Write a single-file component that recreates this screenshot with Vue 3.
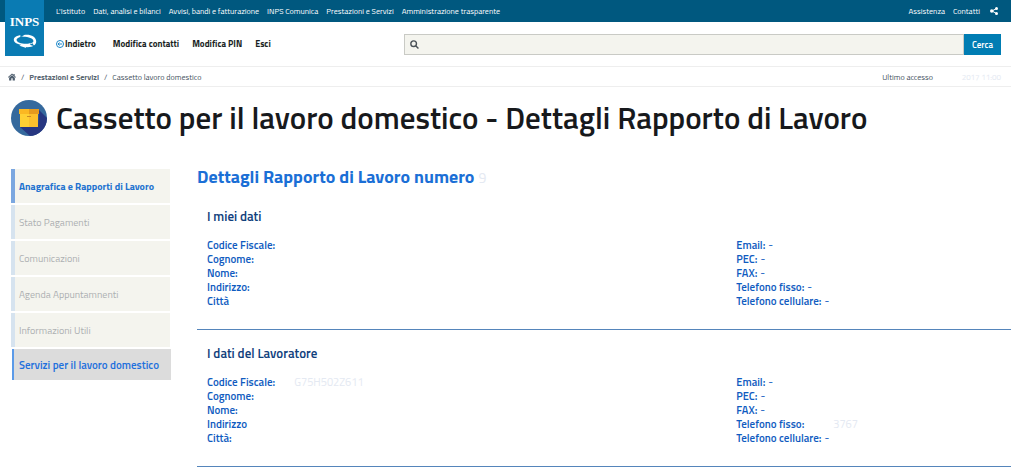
<script setup>
const topLinks = ["L'Istituto", 'Dati, analisi e bilanci', 'Avvisi, bandi e fatturazione', 'INPS Comunica', 'Prestazioni e Servizi', 'Amministrazione trasparente']
const menu = ['Anagrafica e Rapporti di Lavoro', 'Stato Pagamenti', 'Comunicazioni', 'Agenda Appuntamnenti', 'Informazioni Utili']
const sections = [
  {
    title: 'I miei dati',
    left: [['Codice Fiscale:', ''], ['Cognome:', ''], ['Nome:', ''], ['Indirizzo:', ''], ['Città', '']],
    right: [['Email:', '-'], ['PEC:', '-'], ['FAX:', '-'], ['Telefono fisso:', '-'], ['Telefono cellulare:', '-']],
  },
  {
    title: 'I dati del Lavoratore',
    left: [['Codice Fiscale:', 'G75H502Z611', true], ['Cognome:', ''], ['Nome:', ''], ['Indirizzo', ''], ['Città:', '']],
    right: [['Email:', '-'], ['PEC:', '-'], ['FAX:', '-'], ['Telefono fisso:', '3767', true], ['Telefono cellulare:', '-']],
  },
]
</script>

<template>
  <div class="page">
    <header class="header">
      <a class="logo" href="#" aria-label="INPS">
        <span class="logo-text">INPS</span>
        <svg class="logo-mark" viewBox="0 0 26 15" aria-hidden="true">
          <path fill="#fff" fill-rule="evenodd" d="M12 1C19 0 25 3 25 8C25 12 21 14.500 14 14L14.500 15L7 12.500L9 11.500C4 11 1 9 1 6C1 3 5 1 12 1ZM11 3C7 3 4 4.500 4 6.500C4 9 9 10.500 14 10.500C19 10.500 22 9.500 22 7.500C22 5 17 3 11 3Z" />
          <path fill="#0a7bb3" d="M8 0L12 2L8 3.500ZM23 13L18 11.500L21 10Z" />
        </svg>
      </a>
      <div class="topbar">
        <nav class="top-links" aria-label="Istituto">
          <a v-for="l in topLinks" :key="l" href="#">{{ l }}</a>
        </nav>
        <div class="top-side">
          <a href="#">Assistenza</a>
          <a href="#">Contatti</a>
          <a class="share" href="#" aria-label="Condividi">
            <svg viewBox="0 0 16 16" width="8" height="8"><path d="M13 3L4 8L13 13" fill="none" stroke="#fff" stroke-width="2" /><circle cx="13" cy="3" r="3" fill="#fff" /><circle cx="3.500" cy="8" r="3.500" fill="#fff" /><circle cx="13" cy="13" r="3" fill="#fff" /></svg>
          </a>
        </div>
      </div>
      <div class="tools">
        <nav class="user-nav" aria-label="Utente">
          <a class="back" href="#">
            <svg viewBox="0 0 16 16" width="8" height="8" fill="none" stroke="#1c86c8" stroke-width="2"><circle cx="8" cy="8" r="7" /><path d="M12 8H4M7 5L4 8L7 11" /></svg>Indietro
          </a>
          <a href="#">Modifica contatti</a>
          <a href="#">Modifica PIN</a>
          <a href="#">Esci</a>
        </nav>
        <form class="search" role="search" @submit.prevent>
          <div class="search-box">
            <svg viewBox="0 0 16 16" width="9" height="9" fill="none" stroke="#4a5157" stroke-width="2.500" aria-hidden="true"><circle cx="6.500" cy="6.500" r="5" /><path d="M10.500 10.500L15 15" /></svg>
            <input type="search" aria-label="Cerca nel sito" />
          </div>
          <button type="submit">Cerca</button>
        </form>
      </div>
    </header>

    <div class="crumb-bar">
      <nav class="crumbs" aria-label="Percorso">
        <a href="#" aria-label="Home"><svg viewBox="0 0 18 16" width="8" height="8"><path fill="#4f5f6f" d="M9 0L12.500 3V1H15V5.500L18 8L17 9.500L9 3L1 9.500L0 8ZM9 4L15.500 9.500V16H10.500V11H7.500V16H2.500V9.500Z" /></svg></a>
        <span>/</span>
        <a class="strong" href="#">Prestazioni e Servizi</a>
        <span>/</span>
        <span>Cassetto lavoro domestico</span>
      </nav>
      <p class="access">Ultimo accesso <span class="faded">2017 11:00</span></p>
    </div>

    <div class="title-row">
      <svg class="title-icon" viewBox="0 0 36 36" aria-hidden="true">
        <defs><clipPath id="disc"><circle cx="18" cy="18" r="18" /></clipPath></defs>
        <g clip-path="url(#disc)">
          <path fill="#35699d" d="M0 0H36V36H0Z" />
          <path fill="#273781" d="M28 10L36 18V36H19L9 27L27 26Z" />
          <path fill="#ffd033" d="M9 13H18V27H9Z" />
          <path fill="#fcc02c" d="M18 13H27V27H18Z" />
          <path fill="#fbb822" d="M8 9H18V14H8Z" />
          <path fill="#e59a1e" d="M18 9H28V14H18Z" />
          <path fill="#c98a24" d="M16 16H20V17H16Z" />
        </g>
      </svg>
      <h1>Cassetto per il lavoro domestico - Dettagli Rapporto di Lavoro</h1>
    </div>

    <div class="body">
      <aside class="side">
        <a v-for="(m, i) in menu" :key="m" href="#" :class="{ active: i === 0 }">{{ m }}</a>
        <a class="services" href="#">Servizi per il lavoro domestico</a>
      </aside>
      <main>
        <h2>Dettagli Rapporto di Lavoro numero <span class="faded small">9</span></h2>
        <section v-for="s in sections" :key="s.title">
          <h3>{{ s.title }}</h3>
          <div class="cols">
            <dl v-for="(col, i) in [s.left, s.right]" :key="i">
              <div v-for="f in col" :key="f[0]">
                <dt>{{ f[0] }}</dt>
                <dd :class="{ faded: f[2], late: f[2] && i === 0, far: f[2] && i === 1 }">{{ f[1] }}</dd>
              </div>
            </dl>
          </div>
        </section>
      </main>
    </div>
  </div>
</template>

<style>
body { background: #fff; }
</style>

<style scoped>
.page {
  font-family: "Titillium Web", Roboto, "Open Sans", sans-serif;
  margin-right: 12px;
  color: #17324d;
}
a { color: inherit; text-decoration: none; white-space: nowrap; }
h1, h2, h3, p, dl, dd { margin: 0; }
svg { flex: none; display: block; }
.faded { color: #e4e9f2; font-weight: 400; }
.small { font-size: 14px; }

.header { position: relative; border-bottom: 1px solid #eee; }
.logo {
  position: absolute; left: 5px; top: 0; width: 39px; height: 56px;
  background: #0a7bb3; color: #fff;
  display: flex; flex-direction: column; align-items: center;
  box-sizing: border-box; padding-top: 10px;
}
.logo-text { font: 700 13px/24px "Liberation Serif", serif; }
.logo-mark { width: 26px; height: 14px; }
.topbar {
  background: #00587f; color: #fff; height: 22px; padding: 0 9px 0 56px;
  display: flex; align-items: center; justify-content: space-between;
  font-size: 8px; line-height: 12px;
}
.top-links { display: flex; gap: 8px; }
.top-side { display: flex; align-items: center; gap: 8px; }
.share { padding: 0 4px 0 2px; }
.tools { display: grid; grid-template-columns: 2fr 3fr; align-items: center; height: 44px; }
.user-nav { display: flex; gap: 13px; padding-left: 56px; font-size: 9px; font-weight: 700; line-height: 14px; color: #1a1f24; }
.back { display: flex; align-items: center; gap: 1px; margin-right: 4px; }
.search { display: flex; height: 21px; padding-right: 10px; }
.search-box { flex: 1; display: flex; align-items: center; gap: 6px; padding-left: 5px; border: 1px solid #c9cac5; background: #f4f4ee; }
.search input { flex: 1; min-width: 0; border: 0; background: transparent; padding: 0; outline: 0; font: inherit; font-size: 9px; }
.search button { width: 37px; border: 0; padding: 0; background: #007db3; color: #fff; font: inherit; font-size: 9px; font-weight: 600; }

.crumb-bar {
  display: flex; align-items: center; justify-content: space-between; height: 19px;
  padding: 0 10px 0 8px; border-bottom: 1px solid #eee; font-size: 8px; line-height: 12px; color: #45525e;
}
.crumbs { display: flex; align-items: center; gap: 5px; }
.strong { font-weight: 700; color: #5a6772; }
.access { display: flex; }
.access .faded { width: 68px; text-align: right; }

.title-row { display: flex; align-items: center; gap: 9px; padding: 8px 0 0 11px; }
.title-icon { width: 36px; height: 36px; }
h1 { font-size: 31px; line-height: 46px; font-weight: 600; color: #17191c; }

.body { display: grid; grid-template-columns: 159px 1fr; gap: 27px; padding: 28px 0 0 11px; }
.side { display: flex; flex-direction: column; gap: 2px; font-size: 10px; }
.side a { box-sizing: border-box; height: 34px; line-height: 36px; padding-left: 4px; border-left: 4px solid #d6e3ef; background: #f4f4ee; color: #adb0b2; }
.side .active { border-color: #7ba7e0; color: #2272d0; font-weight: 700; }
.side .services { height: 31px; line-height: 32px; margin: 0 -1px 0 1px; padding-left: 5px; border-left: 2px solid #5b9ae8; background: #dcdcdc; color: #1e70dd; font-size: 11px; font-weight: 600; }

h2 { font-size: 18px; line-height: 16px; font-weight: 700; color: #1b6fd6; padding-bottom: 14px; }
section { border-bottom: 1px solid #5585bb; padding: 7px 10px 21px; }
section + section { padding-top: 14px; }
h3 { font-size: 13px; line-height: 18px; font-weight: 600; color: #10407c; }
.cols { display: grid; grid-template-columns: 2fr 1fr; padding-top: 13px; }
dl { font-size: 11px; line-height: 14px; color: #0f5bc0; }
dl div { display: flex; gap: 3px; }
dt { font-weight: 600; }
.late { margin-left: 16px; }
.far { margin-left: 26px; }
</style>
